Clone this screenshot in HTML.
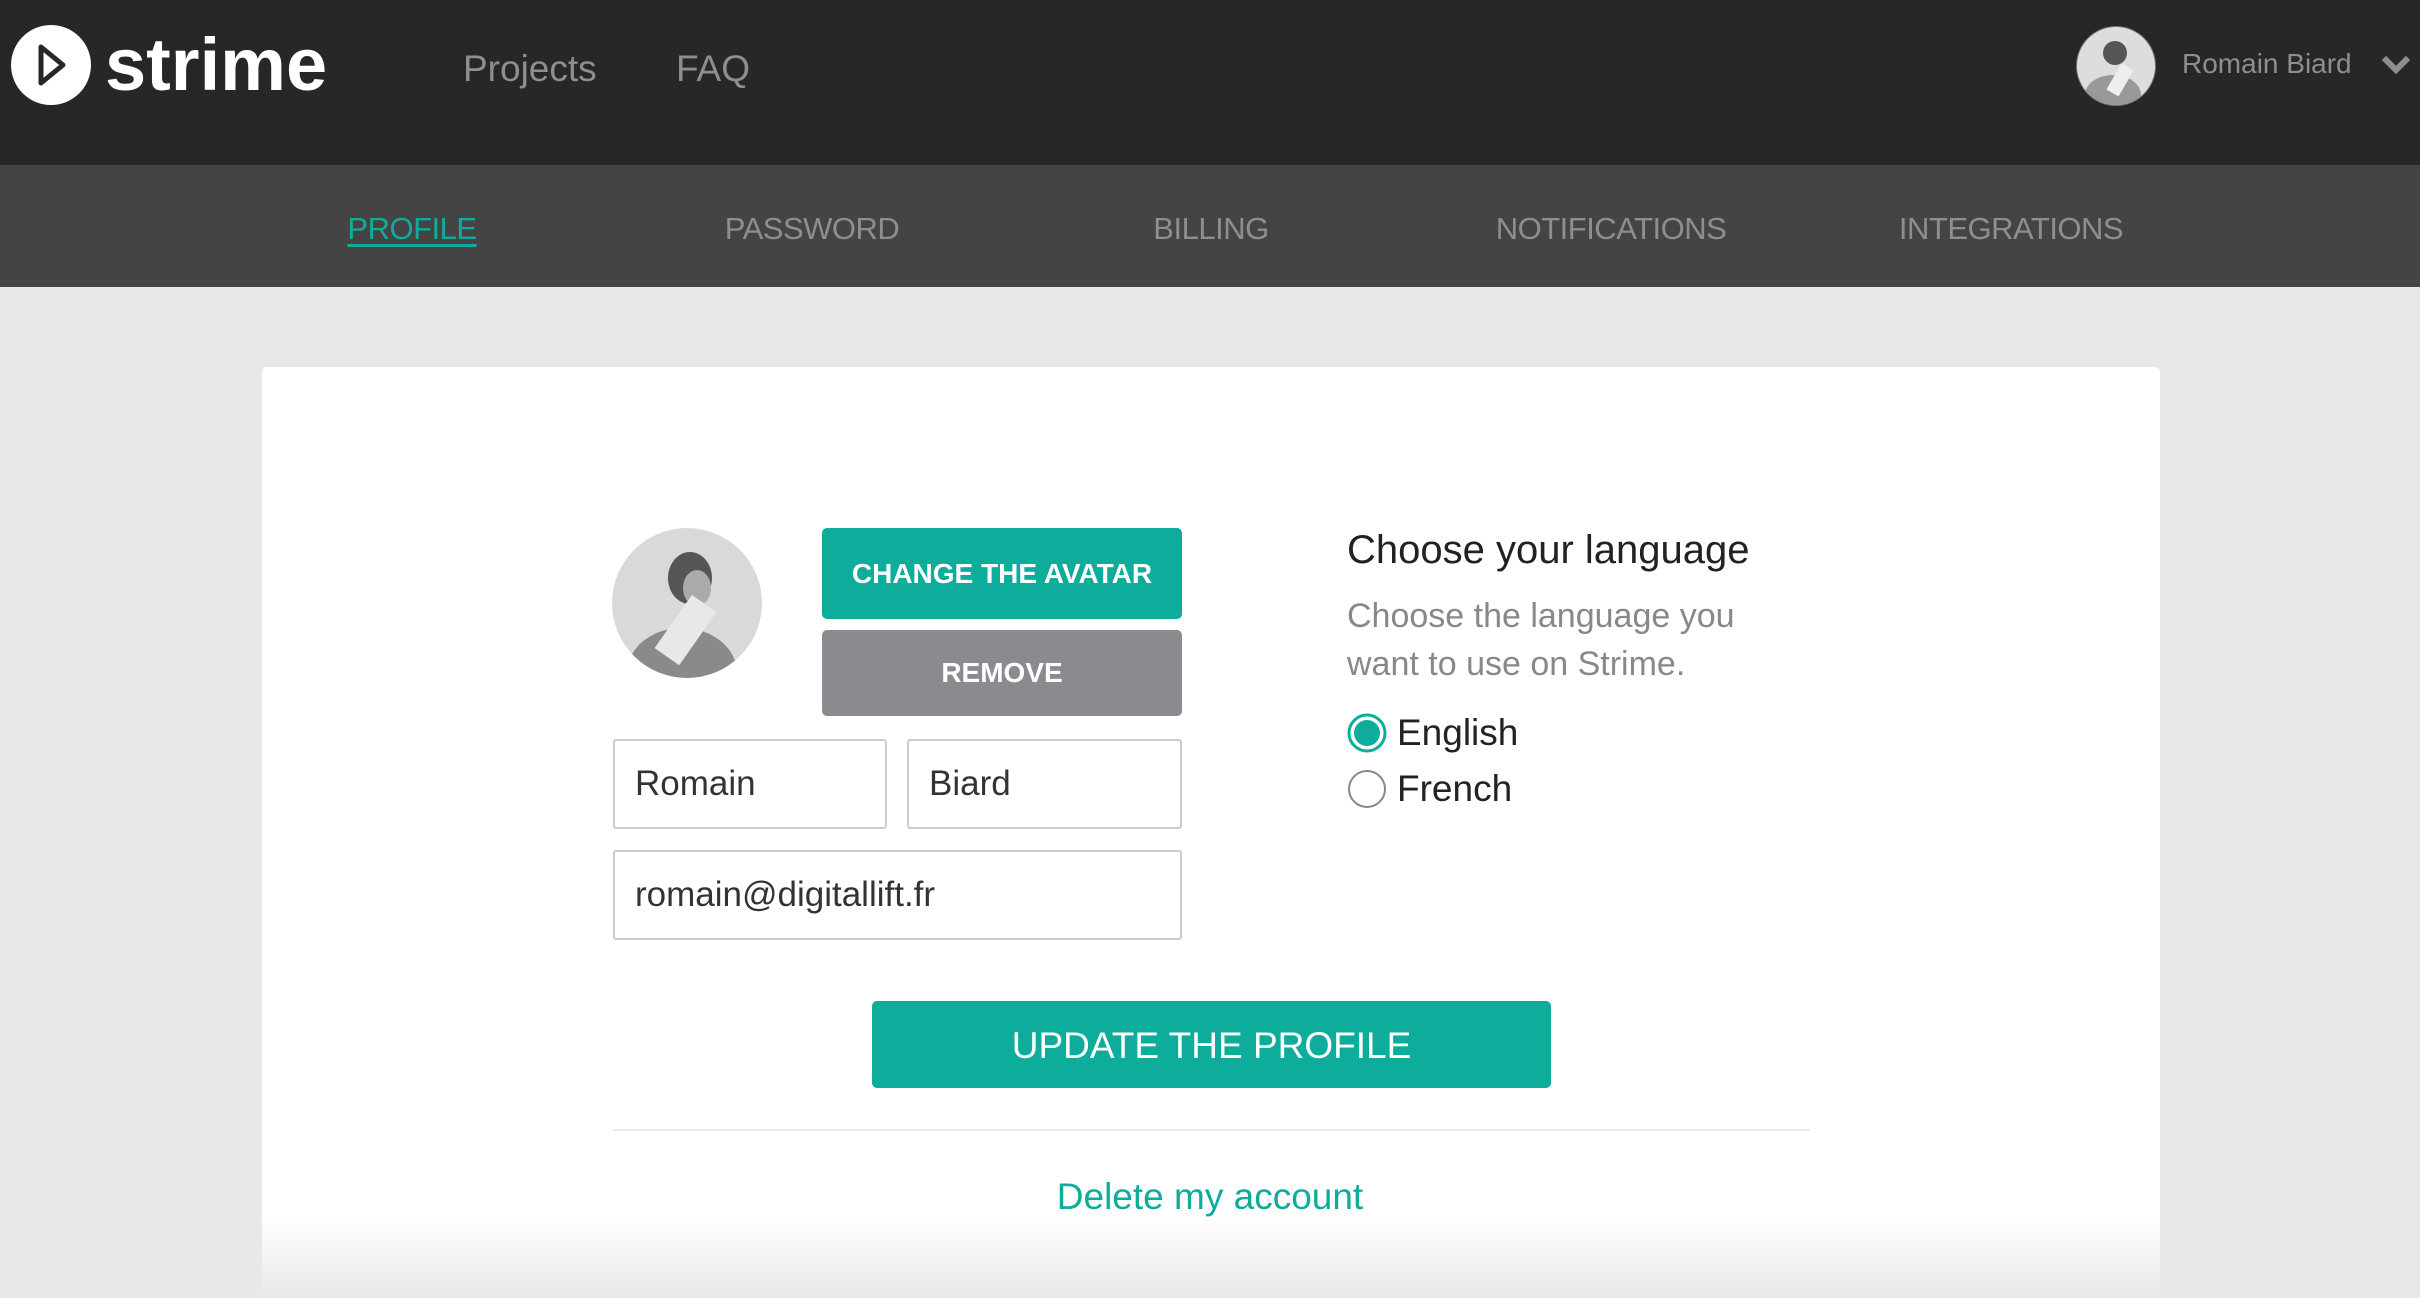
<!DOCTYPE html>
<html><head><meta charset="utf-8"><style>
*{margin:0;padding:0;box-sizing:border-box}
html,body{width:2420px;height:1298px;overflow:hidden}
body{background:#e8e8e8;font-family:"Liberation Sans",sans-serif;position:relative}
.a{position:absolute}
.hdr{left:0;top:0;width:2420px;height:165px;background:#272727}
.sub{left:0;top:165px;width:2420px;height:122px;background:#444}
.tab{top:211px;font-size:31px;color:#8e8e8e;transform:translateX(-50%);white-space:nowrap;letter-spacing:-0.5px}
.card{left:262px;top:367px;width:1898px;height:931px;background:#fff;border-radius:5px 5px 0 0}
.btn{color:#fff;text-align:center;border-radius:5px;font-weight:bold}
.inp{border:2px solid #ccc;border-radius:3px;background:#fff;font-size:35px;color:#333;padding-left:20px;display:flex;align-items:center}
.fade{left:0;top:1215px;width:2420px;height:83px;background:linear-gradient(rgba(236,236,236,0),rgba(232,232,232,1))}
</style></head><body>
<div class="a hdr"></div>
<svg class="a" style="left:11px;top:25px" width="80" height="80" viewBox="0 0 80 80"><circle cx="40" cy="40" r="40" fill="#fff"/><path d="M30 22 L30 58 L52 40 Z" fill="none" stroke="#272727" stroke-width="5" stroke-linejoin="round"/></svg>
<div class="a" style="left:105px;top:20px;font-size:74px;color:#fff;font-weight:bold;letter-spacing:0px;line-height:90px">strime</div>
<div class="a" style="left:463px;top:48px;font-size:37px;color:#8e8e8e">Projects</div>
<div class="a" style="left:676px;top:48px;font-size:37px;color:#8e8e8e">FAQ</div>
<svg class="a" style="left:2075px;top:25px" width="82" height="82" viewBox="0 0 82 82"><defs><clipPath id="c1"><circle cx="41" cy="41" r="39"/></clipPath></defs><circle cx="41" cy="41" r="40" fill="#777"/><g clip-path="url(#c1)"><rect width="82" height="82" fill="#ddd"/><ellipse cx="38" cy="70" rx="28" ry="20" fill="#999"/><circle cx="40" cy="28" r="12" fill="#555"/><rect x="38" y="40" width="14" height="30" fill="#eee" transform="rotate(30 45 55)"/></g></svg>
<div class="a" style="left:2182px;top:48px;font-size:28px;color:#8e8e8e">Romain Biard</div>
<svg class="a" style="left:2380px;top:54px" width="32" height="22" viewBox="0 0 32 22"><path d="M4 4 L16 16 L28 4" fill="none" stroke="#8e8e8e" stroke-width="6"/></svg>
<div class="a sub"></div>
<div class="a tab" style="left:412px;color:#0eac9a;text-decoration:underline;text-underline-offset:5px">PROFILE</div>
<div class="a tab" style="left:812px">PASSWORD</div>
<div class="a tab" style="left:1211px">BILLING</div>
<div class="a tab" style="left:1611px">NOTIFICATIONS</div>
<div class="a tab" style="left:2011px">INTEGRATIONS</div>
<div class="a card"></div>
<svg class="a" style="left:612px;top:528px" width="150" height="150" viewBox="0 0 150 150"><defs><clipPath id="c2"><circle cx="75" cy="75" r="75"/></clipPath></defs><g clip-path="url(#c2)"><rect width="150" height="150" fill="#d9d9db"/><ellipse cx="70" cy="145" rx="55" ry="45" fill="#8a8a8a"/><ellipse cx="78" cy="50" rx="22" ry="26" fill="#555"/><ellipse cx="85" cy="60" rx="14" ry="18" fill="#aaa"/><rect x="60" y="70" width="30" height="65" fill="#e8e8e8" transform="rotate(35 75 100)"/></g></svg>
<div class="a btn" style="left:822px;top:528px;width:360px;height:91px;background:#0eac9a;font-size:28px;line-height:91px">CHANGE THE AVATAR</div>
<div class="a btn" style="left:822px;top:630px;width:360px;height:86px;background:#8a8b8e;font-size:28px;line-height:86px">REMOVE</div>
<div class="a inp" style="left:613px;top:739px;width:274px;height:90px">Romain</div>
<div class="a inp" style="left:907px;top:739px;width:275px;height:90px">Biard</div>
<div class="a inp" style="left:613px;top:850px;width:569px;height:90px">romain@digitallift.fr</div>
<div class="a" style="left:1347px;top:528px;font-size:40px;color:#222">Choose your language</div>
<div class="a" style="left:1347px;top:592px;font-size:34px;color:#888;line-height:48px">Choose the language you<br>want to use on Strime.</div>
<svg class="a" style="left:1346px;top:712px" width="42" height="96" viewBox="0 0 42 96"><circle cx="21" cy="21" r="18" fill="#fff" stroke="#0eac9a" stroke-width="3"/><circle cx="21" cy="21" r="13" fill="#0eac9a"/><circle cx="21" cy="77" r="18" fill="#fff" stroke="#888" stroke-width="2"/></svg>
<div class="a" style="left:1397px;top:712px;font-size:37px;color:#222">English</div>
<div class="a" style="left:1397px;top:768px;font-size:37px;color:#222">French</div>
<div class="a btn" style="left:872px;top:1001px;width:679px;height:87px;background:#0eac9a;font-size:37px;line-height:89px;font-weight:normal">UPDATE THE PROFILE</div>
<div class="a" style="left:613px;top:1129px;width:1197px;height:2px;background:#ececec"></div>
<div class="a" style="left:0;width:2420px;top:1176px;text-align:center;font-size:37px;color:#0eac9a">Delete my account</div>
<div class="a fade"></div>
</body></html>
